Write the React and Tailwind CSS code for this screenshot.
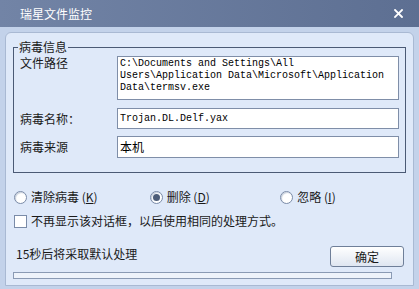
import React from 'react';

const cjk = { fontFamily: '"Noto Sans CJK SC", "Liberation Sans", sans-serif' };
const mono = { fontFamily: '"Liberation Mono", "Noto Sans CJK SC", monospace' };

// Radio option
const Radio = ({ label, hotkey, checked }) => (
  <div className="flex items-center gap-[4px] h-[14px]">
    <span className="w-[13px] h-[13px] rounded-full border border-[#7a8ba8] bg-white flex items-center justify-center shadow-[inset_1px_1px_1px_#c8d0dc]">
      {checked && <span className="w-[7px] h-[7px] rounded-full bg-[#4d5d78]" />}
    </span>
    <span className="text-[12px] leading-[14px] text-[#1a1a1a]">
      {label} (<span className="underline">{hotkey}</span>)
    </span>
  </div>
);

export default function App() {
  return (
    <div className="w-[419px] h-[289px] bg-[#aebfd8] flex flex-col overflow-hidden" style={cjk}>
      {/* Title bar */}
      <div className="h-[27px] bg-gradient-to-r from-[#7284a6] to-[#5d6f92] flex items-center justify-between pl-[20px] pr-[16px] shrink-0">
        <span className="text-white text-[12px]">瑞星文件监控</span>
        <svg width="9" height="9" viewBox="0 0 9 9">
          <path d="M1 1 L8 8 M8 1 L1 8" stroke="#fff" strokeWidth="1.8" strokeLinecap="square" />
        </svg>
      </div>

      {/* Frame */}
      <div className="flex-1 min-h-0 bg-[#c3d2ea] px-[5px] pt-[5px] pb-[3px] flex">
        <div className="flex-1 rounded-t-[6px] bg-[#dfe9f9] border border-[#a9b9d3] flex flex-col px-[7px] pt-[10px]">
          {/* Group box */}
          <div className="relative border border-[#4b5a75] h-[126px] mt-[4px] pt-[8px] pl-[6px] pr-[6px] shrink-0">
            <span className="absolute -top-[9px] left-[4px] bg-[#dfe9f9] px-[1px] text-[12px] leading-[16px] text-[#1a1a1a]">病毒信息</span>
            <div className="flex">
              <span className="w-[97px] text-[12px] leading-[14px] text-[#1a1a1a]">文件路径</span>
              <div className="flex-1 h-[44px] bg-white border border-[#7f8ea8] px-[2px] pt-[1px] text-[10px] leading-[12px] text-black whitespace-pre" style={mono}>
                {'C:\\Documents and Settings\\All\nUsers\\Application Data\\Microsoft\\Application\nData\\termsv.exe'}
              </div>
            </div>
            <div className="flex items-center mt-[8px]">
              <span className="w-[97px] text-[12px] leading-[14px] text-[#1a1a1a]">病毒名称：</span>
              <div className="flex-1 h-[21px] bg-white border border-[#7f8ea8] px-[2px] flex items-center text-[10px] text-black" style={mono}>
                Trojan.DL.Delf.yax
              </div>
            </div>
            <div className="flex items-center mt-[7px]">
              <span className="w-[97px] text-[12px] leading-[14px] text-[#1a1a1a]">病毒来源</span>
              <div className="flex-1 h-[22px] bg-white border border-[#7f8ea8] px-[2px] flex items-center text-[12px] text-black">
                本机
              </div>
            </div>
          </div>

          {/* Actions */}
          <div className="grid grid-cols-3 mt-[17px] pl-[1px] shrink-0">
            <Radio label="清除病毒" hotkey="K" />
            <div className="pl-[5px]"><Radio label="删除" hotkey="D" checked /></div>
            <div className="pl-[5px]"><Radio label="忽略" hotkey="I" /></div>
          </div>
          <div className="flex items-center gap-[4px] mt-[10px] pl-[1px] h-[14px] shrink-0">
            <span className="w-[13px] h-[13px] border border-[#7a8ba8] bg-white" />
            <span className="text-[12px] leading-[14px] text-[#1a1a1a]">不再显示该对话框，以后使用相同的处理方式。</span>
          </div>

          <div className="flex items-end justify-between mt-[18px] pl-[3px] pr-[2px] shrink-0">
            <span className="text-[12px] leading-[14px] text-[#1a1a1a] mb-[6px]">15秒后将采取默认处理</span>
            <button className="w-[74px] h-[21px] rounded-[3px] border border-[#6f7f99] bg-gradient-to-b from-[#ffffff] to-[#dfe6f1] text-[12px] leading-[14px] text-[#1a1a1a]">
              确定
            </button>
          </div>

          {/* Progress */}
          <div className="mt-[5px] mr-[14px] h-[7px] border border-[#8a9ab4] bg-[#eef3fb] shrink-0" />
        </div>
      </div>
    </div>
  );
}
